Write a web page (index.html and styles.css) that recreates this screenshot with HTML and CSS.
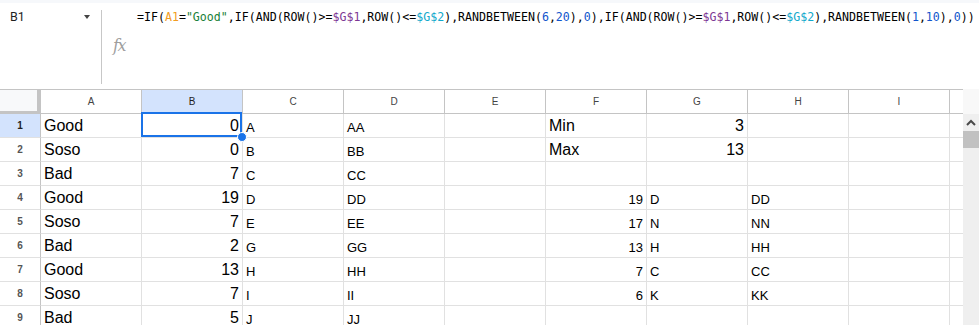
FILE: index.html
```html
<!DOCTYPE html>
<html>
<head>
<meta charset="utf-8">
<link rel="stylesheet" href="styles.css">
</head>
<body>
<div class="fbar">
  <div class="namebox"><span class="nb-text">B1</span><span class="nb-caret"></span></div>
  <div class="divider"></div>
  <div class="fx">fx</div>
  <div class="ftext">=IF(<span class="c-ref1">A1</span>=<span class="c-str">"Good"</span>,IF(AND(ROW()&gt;=<span class="c-ref2">$G$1</span>,ROW()&lt;=<span class="c-ref3">$G$2</span>),RANDBETWEEN(<span class="c-num">6</span>,<span class="c-num">20</span>),<span class="c-num">0</span>),IF(AND(ROW()&gt;=<span class="c-ref2">$G$1</span>,ROW()&lt;=<span class="c-ref3">$G$2</span>),RANDBETWEEN(<span class="c-num">1</span>,<span class="c-num">10</span>),<span class="c-num">0</span>))</div>
</div>
<div class="sheetwrap">
  <div class="grid">
    <div class="corner"></div>
    <div class="ch">A</div><div class="ch ch-sel">B</div><div class="ch">C</div><div class="ch">D</div><div class="ch">E</div><div class="ch">F</div><div class="ch">G</div><div class="ch">H</div><div class="ch">I</div><div class="ch ch-last"></div>

    <div class="rh rh-sel">1</div>
    <div class="c big">Good</div><div class="c big r selcell">0<div class="sel"></div><div class="handle"></div></div><div class="c">A</div><div class="c">AA</div><div class="c"></div><div class="c big">Min</div><div class="c big r">3</div><div class="c"></div><div class="c"></div><div class="c last"></div>

    <div class="rh">2</div>
    <div class="c big">Soso</div><div class="c big r">0</div><div class="c">B</div><div class="c">BB</div><div class="c"></div><div class="c big">Max</div><div class="c big r">13</div><div class="c"></div><div class="c"></div><div class="c last"></div>

    <div class="rh">3</div>
    <div class="c big">Bad</div><div class="c big r">7</div><div class="c">C</div><div class="c">CC</div><div class="c"></div><div class="c"></div><div class="c"></div><div class="c"></div><div class="c"></div><div class="c last"></div>

    <div class="rh">4</div>
    <div class="c big">Good</div><div class="c big r">19</div><div class="c">D</div><div class="c">DD</div><div class="c"></div><div class="c r">19</div><div class="c">D</div><div class="c">DD</div><div class="c"></div><div class="c last"></div>

    <div class="rh">5</div>
    <div class="c big">Soso</div><div class="c big r">7</div><div class="c">E</div><div class="c">EE</div><div class="c"></div><div class="c r">17</div><div class="c">N</div><div class="c">NN</div><div class="c"></div><div class="c last"></div>

    <div class="rh">6</div>
    <div class="c big">Bad</div><div class="c big r">2</div><div class="c">G</div><div class="c">GG</div><div class="c"></div><div class="c r">13</div><div class="c">H</div><div class="c">HH</div><div class="c"></div><div class="c last"></div>

    <div class="rh">7</div>
    <div class="c big">Good</div><div class="c big r">13</div><div class="c">H</div><div class="c">HH</div><div class="c"></div><div class="c r">7</div><div class="c">C</div><div class="c">CC</div><div class="c"></div><div class="c last"></div>

    <div class="rh">8</div>
    <div class="c big">Soso</div><div class="c big r">7</div><div class="c">I</div><div class="c">II</div><div class="c"></div><div class="c r">6</div><div class="c">K</div><div class="c">KK</div><div class="c"></div><div class="c last"></div>

    <div class="rh">9</div>
    <div class="c big">Bad</div><div class="c big r">5</div><div class="c">J</div><div class="c">JJ</div><div class="c"></div><div class="c"></div><div class="c"></div><div class="c"></div><div class="c"></div><div class="c last"></div>
  </div>
  <div class="vscroll">
    <div class="vs-head"></div>
    <div class="vs-track">
      <div class="vs-up"><svg width="10" height="7" viewBox="0 0 10 7"><polyline points="1,6 5,2 9,6" fill="none" stroke="#4a4a4a" stroke-width="2"/></svg></div>
      <div class="vs-thumb"></div>
    </div>
  </div>
</div>
</body>
</html>
```

FILE: styles.css
```css
html, body {
  margin: 0;
  padding: 0;
  background: #fff;
  overflow: hidden;
  height: 325px;
}
body {
  font-family: "Liberation Sans", Arial, sans-serif;
  color: #000;
}

/* formula bar */
.fbar {
  display: flex;
  height: 89px;
  box-sizing: border-box;
  border-top: 3px solid #f6f8fb;
}
.namebox {
  width: 101px;
  flex: none;
  display: flex;
  align-items: flex-start;
  padding: 7px 0 0 10px;
  box-sizing: border-box;
}
.nb-text {
  font-family: Roboto, "Liberation Sans", sans-serif;
  font-size: 12.5px;
  line-height: 14px;
  color: #1f1f1f;
}
.nb-caret {
  margin-left: 59px;
  margin-top: 5px;
  width: 0;
  height: 0;
  border-left: 3.5px solid transparent;
  border-right: 3.5px solid transparent;
  border-top: 4px solid #444;
}
.divider {
  width: 1px;
  flex: none;
  background: #c7c7c7;
  margin: 7px 0 5px 0;
}
.fx {
  width: 35px;
  flex: none;
  box-sizing: border-box;
  padding-left: 11px;
  align-self: center;
  font-family: "DejaVu Serif", "Liberation Serif", serif;
  font-style: italic;
  font-size: 16px;
  line-height: 16px;
  color: #9e9e9e;
  letter-spacing: -1.5px;
}
.ftext {
  padding-top: 7px;
  font-family: "DejaVu Sans Mono", "Liberation Mono", monospace;
  font-size: 11.6px;
  line-height: 14px;
  color: #000;
  white-space: nowrap;
}
.c-ref1 { color: #f29c22; }
.c-str { color: #188038; }
.c-ref2 { color: #7e3794; }
.c-ref3 { color: #11a9cc; }
.c-num { color: #1155cc; }

/* sheet */
.sheetwrap {
  display: flex;
}
.grid {
  display: grid;
  grid-template-columns: 41px repeat(9, 101px) 13px;
  grid-auto-rows: 24px;
  border-top: 1px solid #c4c4c4;
  width: 963px;
  flex: none;
}
.grid > div {
  box-sizing: border-box;
}
.corner {
  background: #f8f9fa;
  border-right: 4px solid #c4c4c4;
  border-bottom: 3px solid #c4c4c4;
}
.ch {
  border-right: 1px solid #c4c4c4;
  border-bottom: 1px solid #c4c4c4;
  display: flex;
  align-items: center;
  justify-content: center;
  font-size: 10px;
  color: #444;
  background: #fff;
}
.ch-sel {
  background: #d3e3fd;
  color: #1f1f1f;
}
.ch-last {
  border-right: none;
}
.rh {
  border-right: 1px solid #c4c4c4;
  border-bottom: 1px solid #e1e1e1;
  display: flex;
  align-items: center;
  justify-content: center;
  font-size: 10px;
  font-weight: bold;
  color: #555;
}
.rh-sel {
  background: #d3e3fd;
  color: #1f1f1f;
}
.c {
  border-right: 1px solid #e1e1e1;
  border-bottom: 1px solid #e1e1e1;
  display: flex;
  align-items: flex-end;
  padding: 0 3px 2px 3px;
  font-size: 13px;
  white-space: nowrap;
}
.c.big {
  font-size: 16px;
}
.c.r {
  justify-content: flex-end;
}
.c.last {
  border-right: none;
}
.selcell {
  position: relative;
}
.sel {
  position: absolute;
  left: -1px;
  top: -2px;
  right: 0;
  bottom: 0;
  border: 2px solid #1a73e8;
  pointer-events: none;
}
.handle {
  position: absolute;
  right: -5px;
  bottom: -5px;
  width: 10px;
  height: 10px;
  box-sizing: border-box;
  border-radius: 50%;
  background: #1a73e8;
  border: 1px solid #fff;
  z-index: 2;
}

/* scrollbar */
.vscroll {
  width: 16px;
  flex: none;
  display: flex;
  flex-direction: column;
}
.vs-head {
  height: 25px;
  background: #f8f8f8;
}
.vs-track {
  flex: 1;
  background: #efefef;
  height: 211px;
}
.vs-up {
  height: 17px;
  display: flex;
  align-items: center;
  justify-content: center;
}
.vs-thumb {
  height: 17px;
  background: #c1c1c1;
}
```
